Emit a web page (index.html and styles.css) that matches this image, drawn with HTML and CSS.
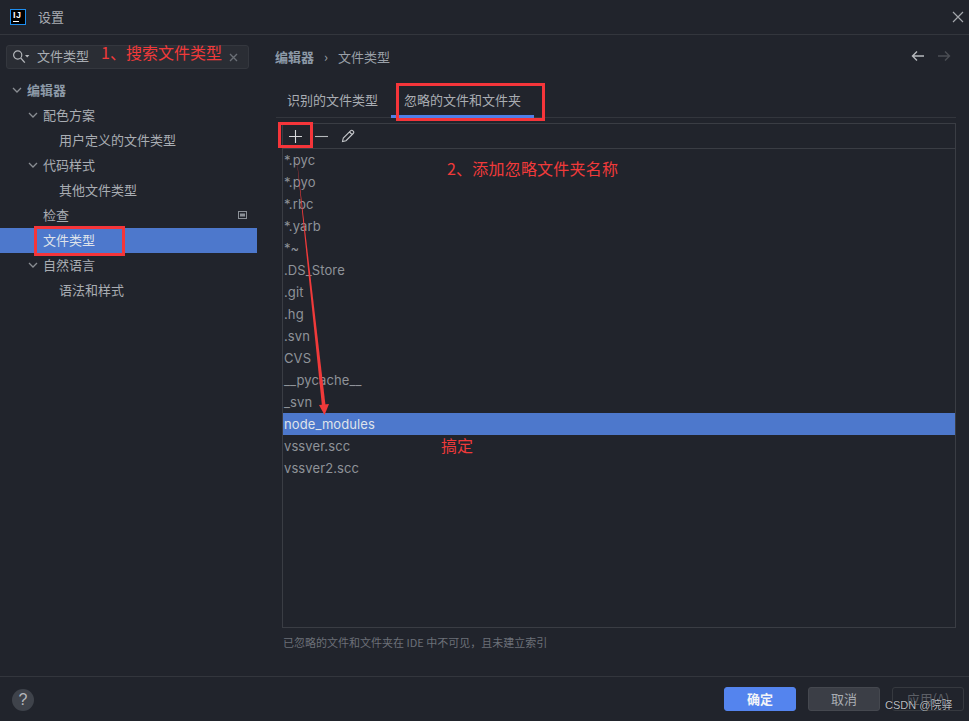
FILE: index.html
```html
<!doctype html>
<html>
<head>
	<title>设置</title>
	<meta charset="utf-8">
	<link rel="stylesheet" href="styles.css">
</head>
<body>
	<div class="dialog">
		<div class="titlebar">
			<div class="logo"><span class="logo-text">IJ</span><span class="logo-bar"></span></div>
			<span class="title">设置</span>
			<svg class="close" width="12" height="12" viewBox="0 0 12 12"><path d="M1 1L11 11M11 1L1 11" stroke="#a3a6ab" stroke-width="1.2" fill="none"/></svg>
		</div>
		<div class="main">
			<div class="sidebar">
				<div class="search">
					<svg class="search-icon" width="17" height="14" viewBox="0 0 17 14"><circle cx="4.7" cy="5" r="4.1" stroke="#b4b7bb" stroke-width="1.2" fill="none"/><path d="M7.8 8.1L11.8 12.6" stroke="#b4b7bb" stroke-width="1.4"/><path d="M12 5h4.4l-2.2 2.4z" fill="#b4b7bb"/></svg>
					<span class="search-text">文件类型</span>
					<svg class="search-clear" width="9" height="9" viewBox="0 0 9 9"><path d="M1 1L8 8M8 1L1 8" stroke="#6b6f76" stroke-width="1.4"/></svg>
				</div>
				<ul class="tree">
					<li class="row level0 bold"><svg class="chev" width="10" height="6" viewBox="0 0 10 6"><path d="M1 1L5 5L9 1" stroke="#8a8d93" stroke-width="1.3" fill="none"/></svg>编辑器</li>
					<li class="row level1"><svg class="chev" width="10" height="6" viewBox="0 0 10 6"><path d="M1 1L5 5L9 1" stroke="#8a8d93" stroke-width="1.3" fill="none"/></svg>配色方案</li>
					<li class="row level2">用户定义的文件类型</li>
					<li class="row level1"><svg class="chev" width="10" height="6" viewBox="0 0 10 6"><path d="M1 1L5 5L9 1" stroke="#8a8d93" stroke-width="1.3" fill="none"/></svg>代码样式</li>
					<li class="row level2">其他文件类型</li>
					<li class="row level1 plain">检查<svg class="project-icon" width="9" height="8" viewBox="0 0 9 8"><rect x="0.5" y="0.5" width="8" height="7" fill="none" stroke="#8b9097"/><rect x="2" y="2.5" width="5" height="3" fill="#8b9097"/></svg></li>
					<li class="row level1 plain selected">文件类型</li>
					<li class="row level1"><svg class="chev" width="10" height="6" viewBox="0 0 10 6"><path d="M1 1L5 5L9 1" stroke="#8a8d93" stroke-width="1.3" fill="none"/></svg>自然语言</li>
					<li class="row level2">语法和样式</li>
				</ul>
			</div>
			<div class="content">
				<div class="crumbs">
					<span class="crumb-first">编辑器</span>
					<span class="crumb-sep">›</span>
					<span>文件类型</span>
					<div class="nav">
						<svg width="14" height="12" viewBox="0 0 14 12"><path d="M13 6H2M6 1.5L1.5 6L6 10.5" stroke="#b6b9bd" stroke-width="1.4" fill="none"/></svg>
						<svg width="14" height="12" viewBox="0 0 14 12"><path d="M1 6H12M8 1.5L12.5 6L8 10.5" stroke="#4b4e54" stroke-width="1.4" fill="none"/></svg>
					</div>
				</div>
				<div class="tabs">
					<div class="tab first">识别的文件类型</div>
					<div class="tab active">忽略的文件和文件夹</div>
				</div>
				<div class="panel">
					<div class="toolbar">
						<svg width="13" height="13" viewBox="0 0 13 13"><path d="M6.5 0V13M0 6.5H13" stroke="#d5d7da" stroke-width="1.1"/></svg>
						<svg width="13" height="13" viewBox="0 0 13 13"><path d="M0 6.5H13" stroke="#b6b9bd" stroke-width="1.1"/></svg>
						<svg width="14" height="14" viewBox="0 0 14 14"><path d="M1.5 12.5L2.3 9L9.5 1.8C10.2 1.1 11.2 1.1 11.9 1.8L12.2 2.1C12.9 2.8 12.9 3.8 12.2 4.5L5 11.7ZM8.5 3L11 5.5" stroke="#c4c6ca" stroke-width="1.1" fill="none"/></svg>
					</div>
					<ul class="list">
						<li>*.pyc</li>
						<li>*.pyo</li>
						<li>*.rbc</li>
						<li>*.yarb</li>
						<li>*~</li>
						<li>.DS_Store</li>
						<li>.git</li>
						<li>.hg</li>
						<li>.svn</li>
						<li>CVS</li>
						<li>__pycache__</li>
						<li>_svn</li>
						<li class="selected">node_modules</li>
						<li>vssver.scc</li>
						<li>vssver2.scc</li>
					</ul>
				</div>
				<div class="hint">已忽略的文件和文件夹在 IDE 中不可见，且未建立索引</div>
			</div>
		</div>
		<div class="footer">
			<div class="help">?</div>
			<div class="buttons">
				<div class="btn primary">确定</div>
				<div class="btn">取消</div>
				<div class="btn disabled">应用(A)</div>
			</div>
		</div>

		<!-- red marks drawn on top of the screenshot -->
		<div class="note note1">1、搜索文件类型</div>
		<div class="note note2">2、添加忽略文件夹名称</div>
		<div class="note note3">搞定</div>
		<div class="mark mark-tree"></div>
		<div class="mark mark-tab"></div>
		<div class="mark mark-add"></div>
		<svg class="arrow" width="40" height="270" viewBox="0 0 40 270"><path d="M6 2L35.6 256L32 256.4z" fill="#f03a3a"/><path d="M29 255L39 254L34.5 265z" fill="#f03a3a"/></svg>
		<div class="watermark">CSDN @院驿</div>
	</div>
</body>
</html>
```

FILE: styles.css
```css
* {
	box-sizing: border-box;
}
html, body {
	margin: 0;
	padding: 0;
	background: #21242c;
}
ul {
	list-style: none;
	margin: 0;
	padding: 0;
}
.dialog {
	position: relative;
	display: flex;
	flex-direction: column;
	width: 969px;
	height: 721px;
	overflow: hidden;
	background: #21242c;
	color: #a9adb3;
	font-family: "Noto Sans CJK SC", "Liberation Sans", sans-serif;
	font-size: 13px;
}
.titlebar {
	display: flex;
	align-items: center;
	height: 35px;
	padding: 0 5px 1px 10px;
	border-bottom: 1px solid #33363d;
}
.logo {
	position: relative;
	width: 16px;
	height: 16px;
	background: #000;
	border: 1px solid #1e8ef0;
}
.logo-text {
	position: absolute;
	left: 2px;
	top: 1px;
	color: #fff;
	font: bold 9px/9px "Liberation Sans", sans-serif;
	letter-spacing: 0.5px;
}
.logo-bar {
	position: absolute;
	left: 2px;
	bottom: 2px;
	width: 6px;
	height: 1px;
	background: #fff;
}
.title {
	margin-left: 12px;
}
.close {
	margin-left: auto;
}
.main {
	display: flex;
	flex: 1;
	min-height: 0;
}
.sidebar {
	width: 257px;
	padding-top: 10px;
}
.search {
	display: flex;
	align-items: center;
	width: 243px;
	height: 24px;
	margin-left: 6px;
	padding: 0 10px 3px 6px;
	background: #2a2d34;
	border: 1px solid #34373e;
	border-radius: 3px;
}
.search-icon {
	margin-top: 3px;
}
.search-text {
	margin-left: 7px;
}
.search-clear {
	margin-top: 3px;
	margin-left: auto;
}
.tree {
	margin-top: 9px;
}
.row {
	display: flex;
	align-items: center;
	height: 25px;
	padding-bottom: 2px;
}
.chev {
	margin-right: 5px;
}
.level0 {
	padding-left: 12px;
}
.level1 {
	padding-left: 28px;
}
.level1.plain {
	padding-left: 43px;
}
.level2 {
	padding-left: 59px;
}
.bold {
	font-weight: bold;
	color: #8d9aa8;
}
.row.selected {
	background: #4d78cc;
	color: #dfe3ea;
}
.project-icon {
	margin-left: auto;
	margin-right: 10px;
}
.content {
	display: flex;
	flex-direction: column;
	flex: 1;
	padding: 10px 13px 0 18px;
}
.crumbs {
	display: flex;
	align-items: center;
	height: 24px;
	padding-bottom: 2px;
	color: #9aa0a8;
}
.crumb-first {
	font-weight: bold;
	color: #8d9aa8;
}
.crumb-sep {
	margin: 0 10px;
}
.nav {
	display: flex;
	gap: 12px;
	margin-left: auto;
	margin-right: 5px;
}
.tabs {
	display: flex;
	height: 35px;
	margin-top: 14px;
	margin-left: 1px;
	border-bottom: 1px solid #33363d;
}
.tab {
	height: 35px;
	padding: 7px 13px 0 13px;
}
.tab.first {
	padding-left: 11px;
}
.tab.active {
	border-bottom: 3px solid #4f7fe8;
}
.panel {
	display: flex;
	flex-direction: column;
	height: 505px;
	margin: 5px 0 0 7px;
	border: 1px solid #3a3d44;
}
.toolbar {
	display: flex;
	align-items: center;
	gap: 13px;
	height: 25px;
	padding-left: 6px;
	border-bottom: 1px solid #3a3d44;
}
.list li {
	height: 22px;
	padding-left: 1px;
	font: 13px/22px "Inter", "Liberation Sans", sans-serif;
	letter-spacing: 0.1px;
	color: #8f9399;
}
.list li.selected {
	background: #4d78cc;
	color: #dfe3ea;
}
.hint {
	margin: 7px 0 0 8px;
	font-size: 11px;
	line-height: 14px;
	color: #6c7078;
}
.footer {
	display: flex;
	align-items: center;
	height: 45px;
	padding: 0 5px 0 12px;
	border-top: 1px solid #33363d;
}
.help {
	width: 22px;
	height: 22px;
	margin-top: 2px;
	border-radius: 50%;
	background: #3f434b;
	color: #b4b7bb;
	text-align: center;
	font: 16px/22px "Liberation Sans", sans-serif;
}
.buttons {
	display: flex;
	gap: 12px;
	margin-left: auto;
}
.btn {
	width: 72px;
	height: 24px;
	border: 1px solid #45484f;
	border-radius: 3px;
	background: #3b3e46;
	text-align: center;
	line-height: 22px;
	color: #a9adb3;
}
.btn.primary {
	background: #5484ee;
	border-color: #5484ee;
	color: #f2f4f8;
	font-weight: bold;
}
.btn.disabled {
	background: transparent;
	border-color: #36393f;
	color: #5c5f66;
}
.note {
	position: absolute;
	color: #f03a3a;
	font-size: 16px;
	line-height: 20px;
	white-space: nowrap;
}
.note1 {
	left: 101px;
	top: 42px;
}
.note2 {
	left: 447px;
	top: 158px;
	letter-spacing: 0.2px;
}
.note3 {
	left: 441px;
	top: 435px;
}
.mark {
	position: absolute;
	border: 3px solid #f5353a;
}
.mark-tree {
	left: 34px;
	top: 226px;
	width: 91px;
	height: 30px;
}
.mark-tab {
	left: 396px;
	top: 83px;
	width: 149px;
	height: 38px;
}
.mark-add {
	left: 278px;
	top: 122px;
	width: 35px;
	height: 26px;
}
.arrow {
	position: absolute;
	left: 290px;
	top: 150px;
}
.watermark {
	position: absolute;
	left: 885px;
	top: 697px;
	font: 11px/16px "Liberation Sans", "Noto Sans CJK SC", sans-serif;
	color: #b9bcc1;
	text-shadow: 0 0 1px #000;
}
```
